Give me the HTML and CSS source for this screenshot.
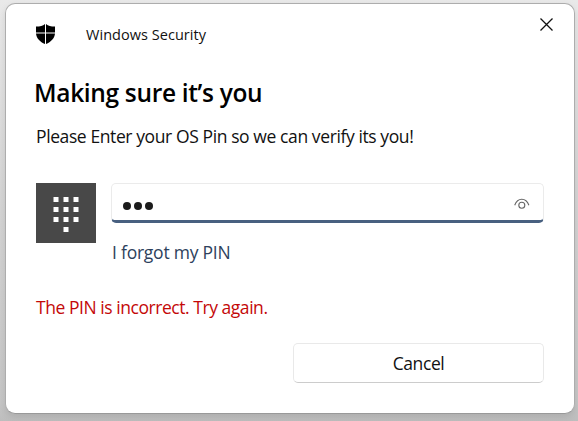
FILE: index.html
```html
<!DOCTYPE html>
<html lang="en">
<head>
<meta charset="utf-8">
<title>Windows Security</title>
<link rel="stylesheet" href="styles.css">
</head>
<body>
<main class="dialog">
  <header class="titlebar">
    <svg class="shield" width="19" height="20" viewBox="0 0 19 20"><path d="M0 2.6C3.5 2.7 6.8 1.8 9 0V8.5H0ZM10 0C12.2 1.8 15.5 2.7 19 2.6V8.5H10ZM0 9.5H9V20C4 18 .5 14.4 0 9.5ZM10 9.5H19C18.5 14.4 15 18 10 20Z"/></svg>
    <span class="app">Windows Security</span>
    <button class="close" aria-label="Close"><svg width="13" height="13" viewBox="0 0 13 13"><path d="M.5.5l12 12M12.5.5l-12 12"/></svg></button>
  </header>
  <h1 class="title">Making sure it’s you</h1>
  <p class="message">Please Enter your OS Pin so we can verify its you!</p>
  <section class="entry">
    <svg class="keypad" width="60" height="60" viewBox="0 0 60 60"><path d="M17.5 14h5v5h-5zM27.5 14h5v5h-5zM37.5 14h5v5h-5zM17.5 24h5v5h-5zM27.5 24h5v5h-5zM37.5 24h5v5h-5zM17.5 34h5v5h-5zM27.5 34h5v5h-5zM37.5 34h5v5h-5zM27.5 44h5v5h-5z"/></svg>
    <div class="fields">
      <div class="pin">
        <span class="dots"><i></i><i></i><i></i></span>
        <svg class="eye" width="16" height="12" viewBox="0 0 16 12"><path d="M.7 7.3C2.1 3.5 4.6 1.3 7.8 1.3s5.7 2.2 7.1 6"/><circle cx="7.8" cy="7.2" r="3"/></svg>
      </div>
      <a class="forgot">I forgot my PIN</a>
    </div>
  </section>
  <p class="error">The PIN is incorrect. Try again.</p>
  <button class="cancel"><span>Cancel</span></button>
</main>
</body>
</html>
```

FILE: styles.css
```css
* { box-sizing: border-box; }
body {
  margin: 0;
  width: 578px;
  height: 421px;
  padding: 3px 3px 7px 5px;
  overflow: hidden;
  background: linear-gradient(#e9e9e9, #d4d4d4 50%, #c6c6c6 96%, #bdbdbd);
  font-family: "Open Sans", "Noto Sans", sans-serif;
  font-size: 17.5px;
  letter-spacing: -.4px;
  color: #111;
}
.dialog {
  display: flex;
  flex-direction: column;
  width: 570px;
  height: 411px;
  padding: 0 30px;
  background: #fff;
  border: 1px solid #adadad;
  border-bottom-color: #999;
  border-radius: 10px;
  box-shadow: 0 3px 7px rgba(0, 0, 0, .1);
}
h1, p { margin: 0; white-space: nowrap; }
button { padding: 0; border: 0; background: none; font: inherit; letter-spacing: inherit; color: inherit; }
.titlebar { display: flex; height: 60px; }
.shield { margin: 20px 31px 0 0; fill: #000; }
.app { margin-top: 21px; font-size: 14.5px; line-height: 20px; letter-spacing: .04px; }
.close { margin: 14px -9px 0 auto; width: 13px; height: 13px; display: flex; }
.close svg { fill: none; stroke: #111; stroke-width: 1.3; }
.title { margin: 13px 0 0 -2px; font-size: 24.5px; font-weight: 600; line-height: 32px; letter-spacing: -.33px; color: #000; }
.message { margin-top: 15px; line-height: 24px; }
.entry { display: flex; margin-top: 35px; gap: 15px; }
.keypad { background: #484848; fill: #fff; }
.fields { display: flex; flex-direction: column; width: 433px; }
.pin {
  display: flex;
  align-items: center;
  justify-content: space-between;
  height: 40px;
  padding: 5px 13px 0 11px;
  border: 1px solid #ebebeb;
  border-bottom: 3px solid #486080;
  border-radius: 5px;
}
.dots { display: flex; gap: 3px; margin-top: 3px; }
.dots i { width: 8px; height: 8px; border-radius: 50%; background: #1b1b1b; }
.eye { margin-bottom: 2px; fill: none; stroke: #666; stroke-width: 1.1; }
.forgot { margin: 17px 0 0 1px; line-height: 24px; letter-spacing: -.23px; color: #2d415c; }
.error { margin-top: 31px; line-height: 24px; letter-spacing: -.45px; color: #c40808; }
.cancel {
  align-self: flex-end;
  width: 251px;
  height: 40px;
  margin-top: 24px;
  border: 1px solid #e9e9e9;
  border-bottom-color: #ccc;
  border-radius: 5px;
}
```
